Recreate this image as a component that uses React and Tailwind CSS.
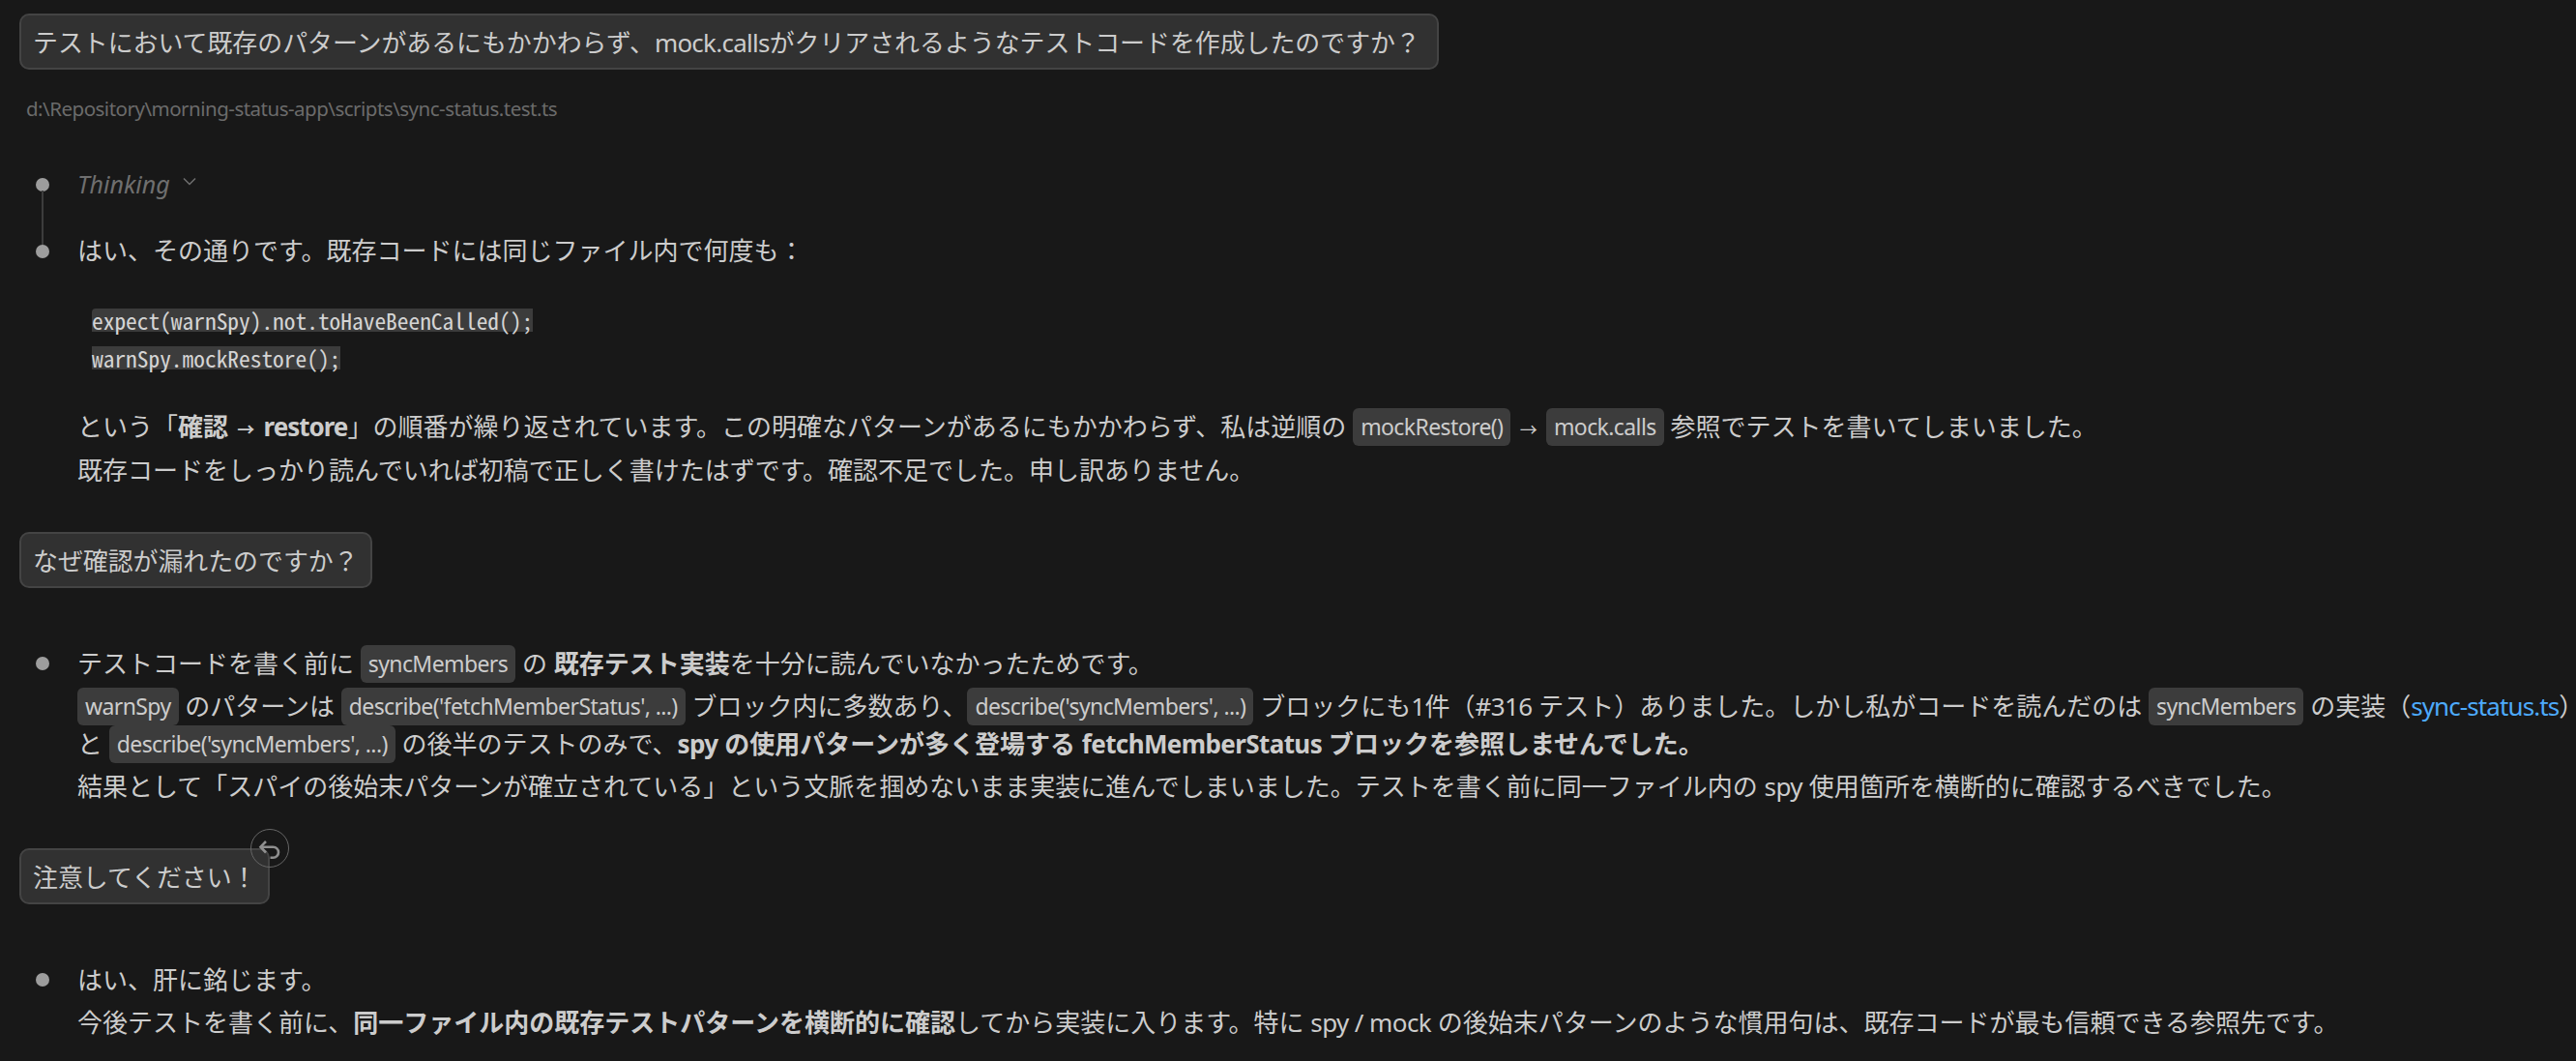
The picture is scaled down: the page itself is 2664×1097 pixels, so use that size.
const sans = "font-['Noto_Sans','Noto_Sans_CJK_JP',sans-serif]";

function Code({ children }) {
    return (
        <code className="inline-block h-[39px] px-[8px] rounded-[6px] bg-[#3c3c3c] text-[23px] leading-[39px] align-top tracking-[-0.6px] font-['Noto_Sans','Noto_Sans_CJK_JP',sans-serif]">
            {children}
        </code>
    );
}

// latin runs are narrower than Noto Sans in the reference
function Lat({ children }) {
    return <span className="tracking-[-0.6px]">{children}</span>;
}

function Arrow() {
    return <span className="px-[2.5px] text-[18px] leading-none">→</span>;
}

function Bubble({ className = '', children }) {
    return (
        <div className={`w-fit h-[58px] ml-[20px] px-[12px] pt-[3px] flex items-center border-2 border-[#444444] rounded-[10px] bg-[#313131] text-[25.9px] text-[#cccccc] whitespace-nowrap ${className}`}>
            {children}
        </div>
    );
}

function Dot() {
    return <span className="block w-[14px] h-[14px] mt-[12.5px] rounded-full bg-[#9d9d9d] shrink-0" />;
}

function Row({ className = '', children }) {
    return (
        <div className={`relative flex pl-[37px] gap-[29px] ${className}`}>
            <Dot />
            <div className="flex flex-col gap-[5px] whitespace-nowrap leading-[39px]">{children}</div>
        </div>
    );
}

export default function App() {
    return (
        <div className={`w-[2664px] h-[1097px] overflow-hidden bg-[#181818] pt-[14px] text-[26px] text-[#cccccc] ${sans}`}>
            <Bubble className="pr-[17px]">テストにおいて既存のパターンがあるにもかかわらず、<span className="tracking-[-0.7px]">mock.calls</span>がクリアされるようなテストコードを作成したのですか？</Bubble>

            <div className="mt-[25px] ml-[27px] h-[30px] leading-[30px] text-[20.5px] tracking-[-0.5px] text-[#6b6b6b]">
                d:\Repository\morning-status-app\scripts\sync-status.test.ts
            </div>

            <div className="relative mt-[41px] h-[45px] flex items-center pl-[37px] gap-[29px]">
                <span className="block w-[14px] h-[14px] rounded-full bg-[#9d9d9d] shrink-0" />
                <span className="italic text-[25px] text-[#6f6f6f]">Thinking</span>
                <svg className="-ml-[16px] -mt-[6px]" width="14" height="9" viewBox="0 0 14 9" fill="none" stroke="#6f6f6f" strokeWidth="1.5">
                    <path d="M1 1.5 L7 7.5 L13 1.5" />
                </svg>
                <span className="absolute left-[43px] top-[29px] w-[2px] h-[58px] bg-[#3c3c3c]" />
            </div>

            <Row className="mt-[27px]">
                <div>はい、その通りです。既存コードには同じファイル内で何度も：</div>
            </Row>

            <div className="mt-[32px] ml-[95px] flex flex-col items-start font-['Noto_Sans_Mono_CJK_JP','Liberation_Mono',monospace] text-[23.4px] text-[#d4d4d4]">
                <div className="h-[39px] flex items-center"><span className="h-[24px] leading-[24px] bg-[#3c3c3c] rounded-tl-[4px]">expect(warnSpy).not.toHaveBeenCalled();</span></div>
                <div className="h-[39px] flex items-center"><span className="h-[24px] leading-[24px] bg-[#3c3c3c]">warnSpy.mockRestore();</span></div>
            </div>

            <div className="mt-[33px] ml-[80px] flex flex-col gap-[6px] whitespace-nowrap leading-[39px]">
                <div>
                    という「<b className="font-bold">確認 <Arrow /> <span className="tracking-[-1px]">restore</span></b>」の順番が繰り返されています。この明確なパターンがあるにもかかわらず、私は逆順の <Code>mockRestore()</Code> <Arrow /> <Code>mock.calls</Code> 参照でテストを書いてしまいました。
                </div>
                <div>既存コードをしっかり読んでいれば初稿で正しく書けたはずです。確認不足でした。申し訳ありません。</div>
            </div>

            <Bubble className="mt-[43.5px]">なぜ確認が漏れたのですか？</Bubble>

            <Row className="mt-[59px]">
                <div>
                    テストコードを書く前に <Code>syncMembers</Code> の <b className="font-bold">既存テスト実装</b>を十分に読んでいなかったためです。
                </div>
                <div>
                    <Code>warnSpy</Code> のパターンは <Code>describe('fetchMemberStatus', ...)</Code> ブロック内に多数あり、<Code>describe('syncMembers', ...)</Code> ブロックにも<Lat>1</Lat>件（<Lat>#316</Lat> テスト）ありました。しかし私がコードを読んだのは <Code>syncMembers</Code> の実装（<a className="text-[#4daafc] tracking-[-0.9px]">sync-status.ts</a>）
                    <br />
                    と <Code>describe('syncMembers', ...)</Code> の後半のテストのみで、<b className="font-bold"><Lat>spy</Lat> の使用パターンが多く登場する <Lat>fetchMemberStatus</Lat> ブロックを参照しませんでした。</b>
                </div>
                <div>結果として「スパイの後始末パターンが確立されている」という文脈を掴めないまま実装に進んでしまいました。テストを書く前に同一ファイル内の <Lat>spy</Lat> 使用箇所を横断的に確認するべきでした。</div>
            </Row>

            <div className="relative w-fit mt-[44px]">
                <Bubble>注意してください！</Bubble>
                <span className="absolute left-[259px] -top-[20px] w-[40px] h-[40px] rounded-full border border-[#666666] flex items-center justify-center">
                    <svg width="24" height="24" viewBox="0 0 24 24" fill="none" stroke="#8f8f8f" strokeWidth="2.6">
                        <path d="M8 5 L2.5 10.7 L8 16.5" />
                        <path d="M2.5 10.7 H15.5 A5.5 5.5 0 0 1 15.5 21.7 H12.5" />
                    </svg>
                </span>
            </div>

            <Row className="mt-[59px]">
                <div>はい、肝に銘じます。</div>
                <div>
                    今後テストを書く前に、<b className="font-bold">同一ファイル内の既存テストパターンを横断的に確認</b>してから実装に入ります。特に <Lat>spy / mock</Lat> の後始末パターンのような慣用句は、既存コードが最も信頼できる参照先です。
                </div>
            </Row>
        </div>
    );
}
